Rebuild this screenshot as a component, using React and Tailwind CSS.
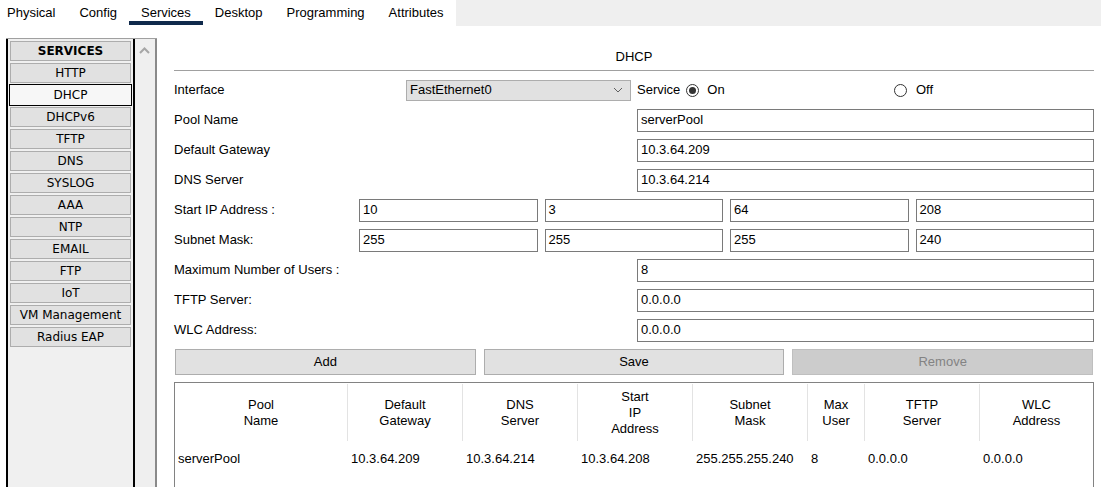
import React from 'react';

const tabs = ['Physical', 'Config', 'Services', 'Desktop', 'Programming', 'Attributes'];
const services = ['HTTP', 'DHCP', 'DHCPv6', 'TFTP', 'DNS', 'SYSLOG', 'AAA', 'NTP', 'EMAIL', 'FTP', 'IoT', 'VM Management', 'Radius EAP'];

const columns = [
  { w: 'w-[172px]', head: ['Pool', 'Name'], val: 'serverPool' },
  { w: 'w-[115px]', head: ['Default', 'Gateway'], val: '10.3.64.209' },
  { w: 'w-[115px]', head: ['DNS', 'Server'], val: '10.3.64.214' },
  { w: 'w-[115px]', head: ['Start', 'IP', 'Address'], val: '10.3.64.208' },
  { w: 'w-[115px]', head: ['Subnet', 'Mask'], val: '255.255.255.240' },
  { w: 'w-[57px]', head: ['Max', 'User'], val: '8' },
  { w: 'w-[115px]', head: ['TFTP', 'Server'], val: '0.0.0.0' },
  { w: 'flex-1', head: ['WLC', 'Address'], val: '0.0.0.0' },
];

const Field = ({ value }) => (
  <div className="h-[23px] w-full border border-[#7a7a7a] bg-white px-[3px] leading-[20px]">{value}</div>
);

const TextRow = ({ label, value }) => (
  <div className="flex h-[30px] items-center">
    <div className="flex-1">{label}</div>
    <div className="w-[457px]">
      <Field value={value} />
    </div>
  </div>
);

const IpRow = ({ label, parts }) => (
  <div className="flex h-[30px] items-center">
    <div className="w-[185px]">{label}</div>
    <div className="flex flex-1 gap-[7px]">
      {parts.map((p, i) => (
        <div key={i} className="flex-1">
          <Field value={p} />
        </div>
      ))}
    </div>
  </div>
);

const Radio = ({ checked }) => (
  <div className="flex h-[13px] w-[13px] items-center justify-center rounded-full border border-[#333] bg-white">
    {checked ? <div className="h-[7px] w-[7px] rounded-full bg-[#333]" /> : null}
  </div>
);

export default function App() {
  return (
    <div className="h-[487px] overflow-hidden bg-white text-[13px] text-black" style={{ fontFamily: '"Liberation Sans", Arial, sans-serif' }}>
      {/* tab bar */}
      <div className="flex h-[26px]">
        {tabs.map((t, i) => (
          <div
            key={t}
            className={`h-[25px] border-b-4 pt-[5px] pr-3 leading-[16px] ${i === 0 ? 'pl-[7px]' : 'pl-3'} ${t === 'Services' ? 'border-[#102a4c]' : 'border-transparent'}`}
          >
            {t}
          </div>
        ))}
        <div className="flex-1 bg-[#efefef]" />
      </div>

      <div className="flex">
        {/* services list */}
        <div className="ml-[6px] mt-[12px] flex h-[460px] border-t border-[#a0a0a0]">
          <div
            className="w-[129px] border-x-2 border-black bg-[#f0f0f0] px-px pt-[2px] text-[12px]"
            style={{ fontFamily: '"DejaVu Sans", Verdana, sans-serif' }}
          >
            <div className="mx-px mb-[2px] flex h-[20px] items-center justify-center border border-[#adadad] bg-[#e1e1e1] font-bold">
              SERVICES
            </div>
            {services.map((s) =>
              s === 'DHCP' ? (
                <div key={s} className="mb-[1px] -mt-px flex h-[22px] items-center justify-center border border-black bg-[#f7f7f7]">
                  {s}
                </div>
              ) : (
                <div key={s} className="mx-px mb-[2px] flex h-[20px] items-center justify-center border border-[#adadad] bg-[#e1e1e1]">
                  {s}
                </div>
              )
            )}
          </div>
          <div className="w-[22px] border-r-2 border-[#8a8a8a] bg-[#efefef] pt-[6px]">
            <svg width="20" height="10" viewBox="0 0 20 10" className="block">
              <path d="M5 8 L9.5 3.5 L14 8" fill="none" stroke="#a6a6a6" strokeWidth="2" />
            </svg>
          </div>
        </div>

        {/* DHCP panel */}
        <div className="ml-[17px] mr-[7px] flex-1">
          <div className="pt-[23px] text-center leading-[16px]">DHCP</div>
          <div className="mt-[5px] h-px bg-[#a0a0a0]" />

          <div className="mt-[4px]">
            <div className="flex h-[30px] items-center">
              <div className="w-[232px]">Interface</div>
              <div className="flex h-[21px] w-[225px] items-center justify-between border border-[#adadad] bg-[#e1e1e1] pl-[3px] pr-[7px]">
                <span>FastEthernet0</span>
                <svg width="10" height="6" viewBox="0 0 10 6">
                  <path d="M1 1 L5 5 L9 1" fill="none" stroke="#606060" strokeWidth="1" />
                </svg>
              </div>
              <div className="ml-[6px] flex w-[257px] items-center">
                <span>Service</span>
                <span className="ml-[6px]"><Radio checked /></span>
                <span className="ml-[8px]">On</span>
              </div>
              <div className="flex items-center">
                <Radio />
                <span className="ml-[9px]">Off</span>
              </div>
            </div>
            <TextRow label="Pool Name" value="serverPool" />
            <TextRow label="Default Gateway" value="10.3.64.209" />
            <TextRow label="DNS Server" value="10.3.64.214" />
            <IpRow label="Start IP Address :" parts={['10', '3', '64', '208']} />
            <IpRow label="Subnet Mask:" parts={['255', '255', '255', '240']} />
            <TextRow label="Maximum Number of Users :" value="8" />
            <TextRow label="TFTP Server:" value="0.0.0.0" />
            <TextRow label="WLC Address:" value="0.0.0.0" />
          </div>

          <div className="mt-[4px] flex gap-2 px-px">
            <div className="flex h-[26px] flex-1 items-center justify-center border border-[#adadad] bg-[#e1e1e1]">Add</div>
            <div className="flex h-[26px] flex-1 items-center justify-center border border-[#adadad] bg-[#e1e1e1]">Save</div>
            <div className="flex h-[26px] flex-1 items-center justify-center border border-[#bfbfbf] bg-[#cccccc] text-[#838383]">Remove</div>
          </div>

          <div className="mt-[7px] h-[140px] border border-[#828282]">
            <div className="flex pt-px">
              {columns.map((c, i) => (
                <div
                  key={i}
                  className={`${c.w} flex h-[57px] flex-col items-center justify-center leading-[16px] ${i > 0 ? 'border-l border-[#e3e3e3]' : ''}`}
                >
                  {c.head.map((h) => (
                    <div key={h}>{h}</div>
                  ))}
                </div>
              ))}
            </div>
            <div className="flex h-[36px] items-center">
              {columns.map((c, i) => (
                <div key={i} className={`${c.w} ${i === 0 ? 'pl-[3px]' : 'pl-[4px]'}`}>
                  {c.val}
                </div>
              ))}
            </div>
          </div>
        </div>
      </div>
    </div>
  );
}
